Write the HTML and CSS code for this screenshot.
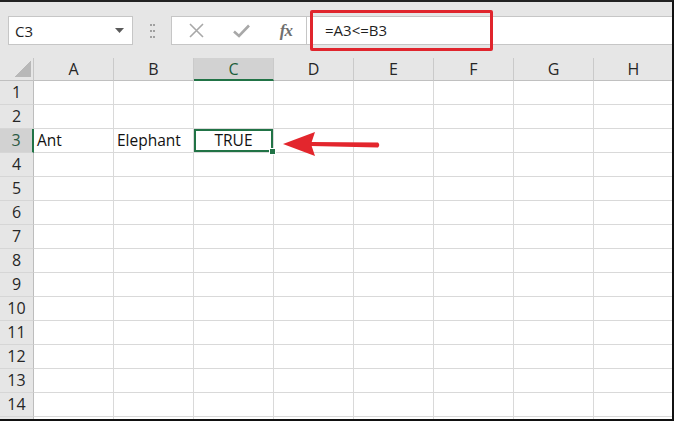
FILE: index.html
```html
<!DOCTYPE html>
<html lang="en">
<head>
  <meta charset="UTF-8">
  <title>Sheet</title>
  <link rel="stylesheet" href="styles.css">
</head>
<body>

<div class="frame">

  <!-- Name box + formula bar -->
  <div class="toolbar">
    <div class="name-box">
      <span>C3</span>
      <svg class="caret" width="9" height="5" viewBox="0 0 9 5"><path d="M0 0 H9 L4.5 5 Z" fill="#5a5a5a"/></svg>
    </div>
    <div class="grip">
      <svg width="5" height="14" viewBox="0 0 5 14">
        <g fill="#a0a0a0">
          <rect x="0" y="0" width="2" height="2"/><rect x="3" y="0" width="2" height="2"/>
          <rect x="0" y="6" width="2" height="2"/><rect x="3" y="6" width="2" height="2"/>
          <rect x="0" y="12" width="2" height="2"/><rect x="3" y="12" width="2" height="2"/>
        </g>
      </svg>
    </div>
    <div class="fx-buttons">
      <svg class="btn" width="15" height="15" viewBox="0 0 15 15"><path d="M1 1 L14 14 M14 1 L1 14" stroke="#a8a8a8" stroke-width="1.6"/></svg>
      <svg class="btn" width="17" height="14" viewBox="0 0 17 14"><path d="M1 7.5 L6 12 L16 1.5" stroke="#a8a8a8" stroke-width="2.6" fill="none"/></svg>
      <span class="fx">fx</span>
    </div>
    <div class="formula">=A3&lt;=B3</div>
  </div>

  <!-- Grid -->
  <div class="sheet">
    <div class="corner"></div>
    <div class="ch">A</div><div class="ch">B</div><div class="ch active">C</div><div class="ch">D</div>
    <div class="ch">E</div><div class="ch">F</div><div class="ch">G</div><div class="ch">H</div>

    <div class="rh">1</div><div class="cell"></div><div class="cell"></div><div class="cell"></div><div class="cell"></div><div class="cell"></div><div class="cell"></div><div class="cell"></div><div class="cell"></div>
    <div class="rh">2</div><div class="cell"></div><div class="cell"></div><div class="cell"></div><div class="cell"></div><div class="cell"></div><div class="cell"></div><div class="cell"></div><div class="cell"></div>
    <div class="rh active">3</div><div class="cell">Ant</div><div class="cell">Elephant</div><div class="cell sel">TRUE</div><div class="cell"></div><div class="cell"></div><div class="cell"></div><div class="cell"></div><div class="cell"></div>
    <div class="rh">4</div><div class="cell"></div><div class="cell"></div><div class="cell"></div><div class="cell"></div><div class="cell"></div><div class="cell"></div><div class="cell"></div><div class="cell"></div>
    <div class="rh">5</div><div class="cell"></div><div class="cell"></div><div class="cell"></div><div class="cell"></div><div class="cell"></div><div class="cell"></div><div class="cell"></div><div class="cell"></div>
    <div class="rh">6</div><div class="cell"></div><div class="cell"></div><div class="cell"></div><div class="cell"></div><div class="cell"></div><div class="cell"></div><div class="cell"></div><div class="cell"></div>
    <div class="rh">7</div><div class="cell"></div><div class="cell"></div><div class="cell"></div><div class="cell"></div><div class="cell"></div><div class="cell"></div><div class="cell"></div><div class="cell"></div>
    <div class="rh">8</div><div class="cell"></div><div class="cell"></div><div class="cell"></div><div class="cell"></div><div class="cell"></div><div class="cell"></div><div class="cell"></div><div class="cell"></div>
    <div class="rh">9</div><div class="cell"></div><div class="cell"></div><div class="cell"></div><div class="cell"></div><div class="cell"></div><div class="cell"></div><div class="cell"></div><div class="cell"></div>
    <div class="rh">10</div><div class="cell"></div><div class="cell"></div><div class="cell"></div><div class="cell"></div><div class="cell"></div><div class="cell"></div><div class="cell"></div><div class="cell"></div>
    <div class="rh">11</div><div class="cell"></div><div class="cell"></div><div class="cell"></div><div class="cell"></div><div class="cell"></div><div class="cell"></div><div class="cell"></div><div class="cell"></div>
    <div class="rh">12</div><div class="cell"></div><div class="cell"></div><div class="cell"></div><div class="cell"></div><div class="cell"></div><div class="cell"></div><div class="cell"></div><div class="cell"></div>
    <div class="rh">13</div><div class="cell"></div><div class="cell"></div><div class="cell"></div><div class="cell"></div><div class="cell"></div><div class="cell"></div><div class="cell"></div><div class="cell"></div>
    <div class="rh">14</div><div class="cell"></div><div class="cell"></div><div class="cell"></div><div class="cell"></div><div class="cell"></div><div class="cell"></div><div class="cell"></div><div class="cell"></div>
    <div class="rh"></div><div class="cell"></div><div class="cell"></div><div class="cell"></div><div class="cell"></div><div class="cell"></div><div class="cell"></div><div class="cell"></div><div class="cell"></div>
  </div>

  <!-- Annotations -->
  <div class="highlight"></div>
  <svg class="arrow" width="104" height="30" viewBox="0 0 104 30">
    <path d="M3 15 L35 3 L31 15 L35 27 Z" fill="#e3262d"/>
    <path d="M31 13 L98 13.5 Q100.5 16 98 18.5 L31 17 Z" fill="#e3262d"/>
  </svg>

</div>

</body>
</html>
```

FILE: styles.css
```css
body {
  margin: 0;
  font-family: "Open Sans", "Noto Sans", sans-serif;
  color: #1f1f1f;
}
.frame {
  position: relative;
  width: 674px;
  height: 421px;
  box-sizing: border-box;
  border-top: 2px solid #222;
  border-right: 2px solid #111;
  border-bottom: 2px solid #111;
  overflow: hidden;
  background: #e6e6e6;
}
.toolbar {
  display: flex;
  height: 56px;
  box-sizing: border-box;
  padding: 14px 0 0 8px;
}
.name-box {
  width: 125px;
  height: 29px;
  box-sizing: border-box;
  border: 1px solid #c6c6c6;
  background: #fff;
  display: flex;
  align-items: center;
  justify-content: space-between;
  padding: 0 8px 0 6px;
  font-size: 15px;
}
.grip {
  width: 38px;
  height: 29px;
  display: flex;
  align-items: center;
  justify-content: center;
}
.fx-buttons {
  width: 136px;
  height: 29px;
  box-sizing: border-box;
  border: 1px solid #c6c6c6;
  background: #fff;
  display: flex;
  align-items: center;
  padding: 0 14px 0 17px;
  justify-content: space-between;
}
.fx {
  font-family: "Liberation Serif", "DejaVu Serif", serif;
  font-style: italic;
  font-weight: bold;
  font-size: 17px;
  color: #6f6f6f;
  letter-spacing: -1px;
}
.formula {
  flex: 1;
  height: 29px;
  box-sizing: border-box;
  border-top: 1px solid #c6c6c6;
  border-bottom: 1px solid #c6c6c6;
  background: #fff;
  padding-left: 18px;
  font-size: 15px;
  line-height: 27px;
}
.sheet {
  display: grid;
  grid-template-columns: 34px repeat(8, 80px);
  grid-template-rows: 23px;
  grid-auto-rows: 24px;
  background: #fff;
}
.corner {
  background: #e6e6e6;
  border-right: 1px solid #c6c6c6;
  border-bottom: 1px solid #c0c0c0;
  display: flex;
  justify-content: flex-end;
  align-items: flex-end;
  padding: 0 2px 3px 0;
}
.corner::after {
  content: "";
  width: 16px;
  height: 17px;
  background: linear-gradient(to top left, #b8b8b8 50%, transparent 50%);
}
.ch {
  background: #e6e6e6;
  border-right: 1px solid #cacaca;
  border-bottom: 1px solid #c0c0c0;
  font-size: 16px;
  text-align: center;
  line-height: 22px;
  color: #262626;
}
.ch.active {
  background: #d2d2d2;
  border-bottom: 2px solid #217346;
  color: #1c5e3a;
}
.rh {
  background: #e6e6e6;
  border-right: 1px solid #bdbdbd;
  border-bottom: 1px solid #d6d6d6;
  font-size: 16px;
  text-align: center;
  line-height: 23px;
  color: #262626;
}
.rh.active {
  background: #d2d2d2;
  border-right: 2px solid #217346;
  color: #2c5a42;
}
.cell {
  border-right: 1px solid #d9d9d9;
  border-bottom: 1px solid #d9d9d9;
  font-size: 15.5px;
  line-height: 23px;
  padding-left: 3px;
  white-space: nowrap;
  color: #111;
}
.cell.sel {
  position: relative;
  text-align: center;
  padding-left: 0;
  box-shadow: inset 0 0 0 2px #217346;
}
.cell.sel::after {
  content: "";
  position: absolute;
  right: -3px;
  bottom: -3px;
  width: 5px;
  height: 5px;
  background: #217346;
  border: 1px solid #fff;
}
.highlight {
  position: absolute;
  left: 310px;
  top: 8px;
  width: 183px;
  height: 41px;
  box-sizing: border-box;
  border: 3px solid #e0252d;
  border-radius: 2px;
}
.arrow {
  position: absolute;
  left: 280px;
  top: 127px;
}
```
